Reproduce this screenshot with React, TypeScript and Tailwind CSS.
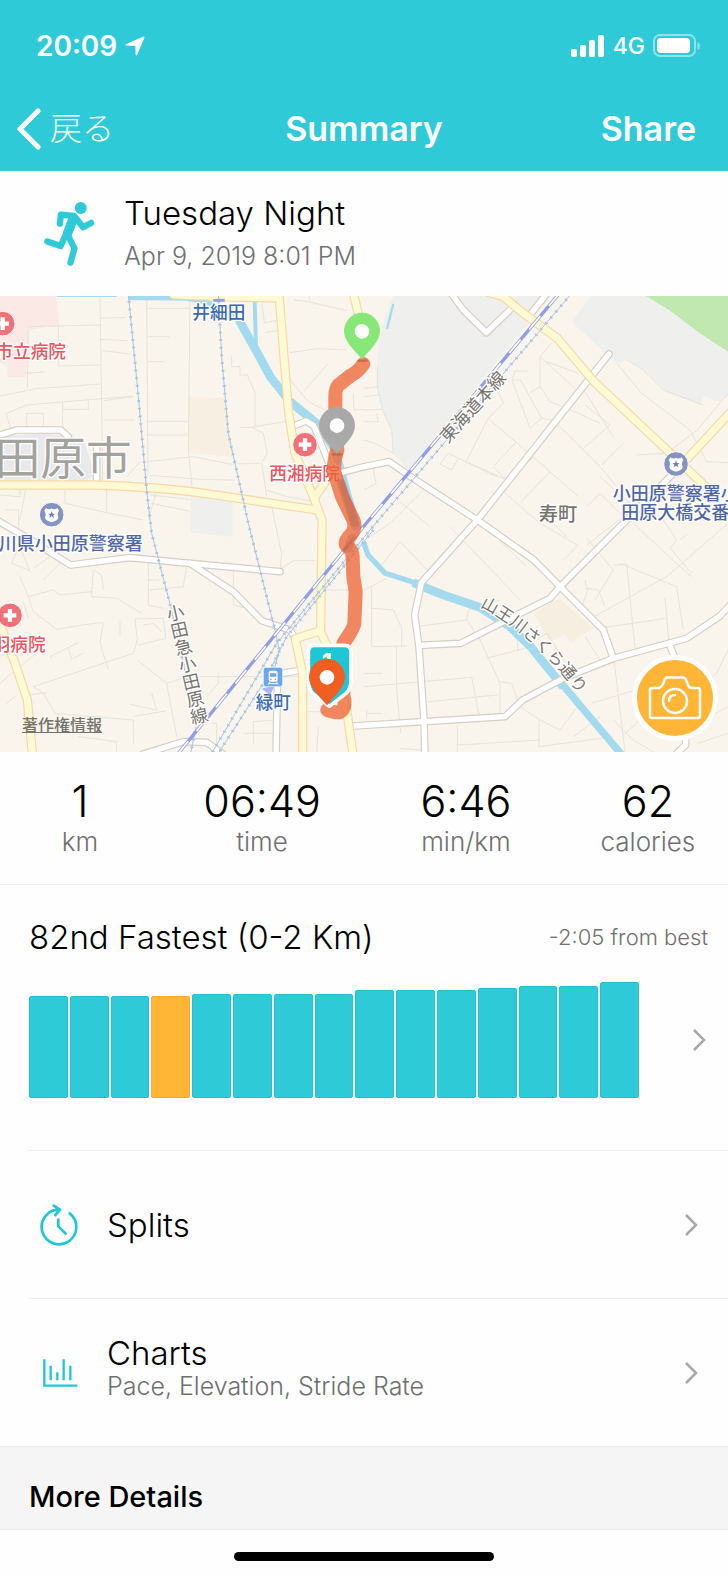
import { ReactNode } from 'react';

const BARS = [102, 102, 102, 102, 104, 104, 104, 104, 108, 108, 108, 110, 112, 112, 116];
const MAX_BAR = 116;
const CURRENT_BAR = 3;

const STATS = [
  { value: '1', label: 'km', width: 'w-[22%]' },
  { value: '06:49', label: 'time', width: 'flex-1' },
  { value: '6:46', label: 'min/km', width: 'flex-1' },
  { value: '62', label: 'calories', width: 'w-[22%]' },
];

const LANES = [
  'M85 120L82 295M87 110L300 105M300 18L308 570M0 318L110 296L300 282M20 370L80 345L400 318M188 338L188 440M188 358H265V332M80 370H130V412H80ZM175 105V228L300 225M310 332L400 320M300 148L382 152M308 182L390 192M302 85L378 82M310 390H405M18 370L32 415',
  'M440 25L444 560M440 55H568M570 28L565 480L576 590M444 140H508M442 215H494M444 394H562M444 435H562M444 515L580 500L690 522L780 520M450 556L600 568L705 570M695 200V230H720V255H742L765 310V410M720 412H755L790 430L802 490L785 520L800 620M755 412L860 394M785 40L793 98L830 92M795 128L832 122',
  'M870 188L950 176L1040 180M985 220L912 303M870 270L925 335L985 365M928 18V32M880 30L925 35L1040 62M1060 310L1062 360L1092 358M80 250L130 246M420 515L380 560',
  'M195 600V640L320 668L430 690M320 600V668M470 600L445 690M450 615L570 628M455 640L570 664M60 585V620L0 615M15 660H56V720M80 580L60 690M815 650L845 790L840 840M800 600L860 620L930 632',
  'M1132 230V290L1148 360L1175 420L1180 490M1092 295L1135 290M1092 320L1140 315M1092 360L1145 358M1130 370L1135 395L1092 395M1092 450L1130 462L1180 490M1120 535L1128 580L1092 600',
  'M1492 300L1510 340L1465 385L1398 515M1465 385L1650 545L1735 620M1398 515L1520 570M1545 460L1480 530L1520 570M1345 490L1376 505L1355 540L1320 522ZM1376 505L1490 560M1536 270L1562 340L1590 415M1536 270H1562L1625 385L1590 415M1545 243H1582M1545 243L1536 270M1625 385L1655 390L1700 430L1800 530L1850 590',
  'M1620 200V290L1650 335L1735 370L1800 400M1620 200L1655 158M1640 215L1735 250M1620 200L1730 300M1590 308L1620 290M1755 345L1830 405L1750 475M1745 290L1840 440M1870 460L1805 525M1910 495L2000 490L2092 420L2184 310M1850 220L1925 310L2070 420L2120 515L2184 518M1882 210L1930 240L1990 300L2110 345',
  'M1505 600L1620 700L1732 765M1650 545L1560 640M1600 500L1510 590M1760 650L1800 610L1870 680L1760 765M1800 560L1900 650M1200 635L1290 710M1270 600L1170 700L1110 740',
  'M60 770L90 845M100 835L150 800M60 860L85 920L160 900L180 915L275 905L280 840L305 855L310 900M275 905V920L350 925L425 970M85 920L100 965L170 1018L280 1000L310 998L300 1060L325 1140M130 870L180 820M58 765L35 820L90 842M70 935L85 985',
  'M360 996V1035M405 987L412 1050L400 1090L100 1190M405 987L490 985L497 1045L415 1065M430 1005L460 1000L485 1025M150 1100L235 1058M205 1075L215 1108L250 1090M412 1110L500 1180L530 1340M500 1180L560 1160H900M455 1210L470 1260L390 1243M0 1180L120 1080M20 1240L50 1215M100 1190L130 1210L165 1270M90 1215L140 1208',
  'M165 1270L400 1290V1360M235 1340L350 1355V1386M400 1280L500 1262M445 820V945L490 955M445 870H480M550 890L560 830M450 900L550 890M700 840V945L740 955M845 835L880 812H945M635 1300H650V1386M760 1295V1360M730 1330L820 1330M760 1295L830 1290M655 1150V1180L620 1220M925 1265H960M955 1310L950 1386M970 900H1050',
  'M1115 890V1070L1220 1068M1115 955L1180 960L1205 1015V1070M1092 900L1160 865M1262 1008L1400 990L1405 960L1500 930M1400 990L1440 1050L1500 1180V1290M1460 1105L1600 1068M1550 1030L1555 1085M1190 1070V1200L1202 1330M1092 1190L1415 1162M1415 1162L1437 1275M1285 1235L1492 1215M1100 1260V1290M1100 1270H1145M1092 1150H1148',
  'M1435 690L1580 830M1350 710L1560 930M1200 755L1300 860M1200 755L1145 825M1700 740L1650 690M1735 765L1690 810M1760 745L1840 840L1785 930M1840 825L1880 822L1905 1075M1755 870L1760 895L1795 900L1815 950M1765 895L1745 950M1782 980L2000 860L2184 700M1860 820L2030 890L2050 1020M1995 925L2007 1060M1790 1015L1900 1000L1995 985',
  'M1900 700L2040 830L2075 860M1990 690L2030 750L2010 775L2075 850M2040 750L2060 735M1610 1050L1640 1030L1700 1120M1755 1040L1800 1110M1500 1175L1535 1180L1560 1250L1620 1290L1680 1320L1740 1240M1617 1290V1370L1840 1340M1800 1280L1720 1340M1775 1240L1990 1175M1842 1110L1875 1386M1990 1175L2020 1260',
  'M1372 1305V1386M1375 1365L1620 1350M1200 1375L1280 1382M1840 1290L1900 1350L1960 1386M2110 1290L2184 1250M2184 1080L2150 1150L2110 1180M1870 1335L1920 1290M2092 1360L2184 1330',
];

const YELLOW_ROADS = [
  'M520 14Q700 22 838 24L852 200L866 370L885 490L942 625L966 690L962 1022L886 1046L908 1150V1400',
  'M1000 540L942 625M0 585H280Q480 590 640 614L950 660',
  'M1060 10L1076 76M960 1022L990 1085L1040 1260L1060 1400',
  'M1460 5L1510 20L1560 62L1672 145L1782 275L1932 415L2128 600M2060 508L2190 368',
  'M-10 975L45 1120L82 1230L98 1400',
];

const WHITE_ROADS = [
  'M-10 438L50 420H182L205 440M290 470V575M-10 690L100 755L212 825L390 803L570 820L840 845',
  'M570 820L700 905L785 992L870 1020L892 1055M835 1152L905 1140M832 1190L828 1400M430 1392L550 1355L620 1357L680 1400',
  'M1060 1308L1272 1295L1515 1280L1568 1230L1690 1165L1840 1105L2060 1045L2160 978L2190 945',
  'M1827 192L1432 690L1264 878L1244 975L1257 1070L1272 1290L1275 1400',
  'M1030 546L1092 530L1167 515L1232 560L1432 690L1602 810L1680 890L1810 1020L1840 1105',
  'M1257 1066L1382 1060L1550 975L1650 925L1680 890L1880 690L2050 520',
  'M888 405L918 393L942 408L985 515M1350 5L1390 60L1459 128L1545 45M1592 72L1645 5',
  'M2007 1060L2025 1105M2057 1330V1365L2030 1390',
];

const RAILS = [
  'M385 10L415 320L440 600L455 730L512 950L590 1300L572 1390',
  'M655 10L665 200L685 430L745 700L825 1020L838 1080L820 1150',
  'M1715 10L1110 720L830 1060L635 1390',
  'M1120 720L860 1040L790 1180L655 1390',
];

function Chevron() {
  return (
    <svg className="h-6 w-4 shrink-0" viewBox="0 0 16 24" fill="none" stroke="#a8a8a8" strokeWidth="2.5" aria-hidden="true">
      <path d="M2 2L12 12L2 22" />
    </svg>
  );
}

function Pin({ x, y, color }: { x: number; y: number; color: string }) {
  return (
    <g transform={`translate(${x} ${y})`}>
      <path d="M0 84C-22 58 -54 30 -54 0A54 56 0 0 1 54 0C54 30 22 58 0 84Z" fill={color} />
      <circle r="22" fill="#fff" />
    </g>
  );
}

function Hospital({ x, y }: { x: number; y: number }) {
  return (
    <g transform={`translate(${x} ${y})`}>
      <circle r="37" fill="#f17179" stroke="#fff" strokeWidth="3" />
      <path d="M0 -19V19M-19 0H19" stroke="#fff" strokeWidth="13" />
    </g>
  );
}

function Police({ x, y }: { x: number; y: number }) {
  return (
    <g transform={`translate(${x} ${y})`}>
      <circle r="37" fill="#8494bf" stroke="#fff" strokeWidth="3" />
      <path d="M-17 -20Q-8 -13 0 -19Q8 -13 17 -20L22 -12Q15 -2 20 8Q20 18 0 23Q-20 18 -20 8Q-15 -2 -22 -12Z" fill="#fff" />
      <path d="M0 -11L3 -3H11L5 2L7 10L0 5L-7 10L-5 2L-11 -3H-3Z" fill="#6f82b5" />
    </g>
  );
}

function RouteMap() {
  return (
    <svg className="block w-full" viewBox="0 18 2184 1368" role="img" aria-label="Route map">
      <rect y="18" width="2184" height="1368" fill="#f9f5ed" />

      {/* land areas */}
      <path d="M1182 10L1150 100L1132 190V290L1148 360L1175 420L1180 490L1225 540L1660 10Z" fill="#eff0ee" />
      <path d="M1780 10L1714 95L1850 220L1882 210L1935 242L2000 305L2100 345L2112 318L2155 335L2184 320V10Z" fill="#eff0ee" />
      <path d="M1925 10L2010 62L2100 130L2184 185V10Z" fill="#c1e8b0" />
      <path d="M0 10H168L178 105L87 120L78 262H22V225L0 220Z" fill="#fbe9e6" />
      <path d="M0 440L130 430L250 445L285 560L240 575H0Z" fill="#e9e9ec" />
      <path d="M567 322L672 325L686 420L702 500L567 490Z" fill="#f7efe1" />
      <path d="M572 620L697 634V740L572 728Z" fill="#eff0ee" />
      <path d="M1602 970L1677 925L1782 1015L1712 1055L1692 1035L1652 1055Z" fill="#f6eee0" />

      {/* side streets */}
      {LANES.map((d) => (
        <path key={d} d={d} fill="none" stroke="#e5e3db" strokeWidth="3" />
      ))}

      {/* rivers */}
      <g fill="none" stroke="#a3daee" strokeLinejoin="round">
        <path d="M170 18H350" strokeWidth="6" />
        <path d="M385 22L560 24Q650 35 720 95" strokeWidth="16" />
        <path d="M718 92L770 185L812 262L870 335L960 408L1005 480L1040 610L1072 720" strokeWidth="26" />
        <path d="M764 35L768 170" strokeWidth="12" />
        <path d="M1180 42L1161 116" strokeWidth="7" />
        <path d="M1090 755L1104 795L1156 850L1250 880" strokeWidth="16" />
        <path d="M1240 878L1330 915L1440 952L1530 1010L1592 1070L1640 1130L1690 1190" strokeWidth="26" />
        <path d="M1680 1175L1735 1240L1866 1395" strokeWidth="22" />
      </g>

      {/* roads: casing first, fill on top */}
      <g fill="none" strokeLinejoin="round" strokeLinecap="round">
        {WHITE_ROADS.map((d) => (
          <path key={d} d={d} stroke="#d6cdc4" strokeWidth="23" />
        ))}
        {WHITE_ROADS.map((d) => (
          <path key={d} d={d} stroke="#fff" strokeWidth="16" />
        ))}
        {YELLOW_ROADS.map((d) => (
          <path key={d} d={d} stroke="#f6d8a4" strokeWidth="28" />
        ))}
        {YELLOW_ROADS.map((d) => (
          <path key={d} d={d} stroke="#fcf9d4" strokeWidth="21" />
        ))}
      </g>

      {/* railways */}
      <g fill="none">
        {RAILS.map((d) => (
          <g key={d} stroke="#a9c3e2">
            <path d={d} strokeWidth="3" />
            <path d={d} strokeWidth="9" strokeDasharray="5 18" />
          </g>
        ))}
        <path d="M1680 8L1092 708L530 1396" stroke="#919ee6" strokeWidth="10" />
        <path d="M1680 8L1092 708L530 1396" stroke="#fff" strokeWidth="5" strokeDasharray="52 40" />
        <path d="M640 31H674" stroke="#919ee6" strokeWidth="9" />
      </g>

      {/* labels */}
      <g fontFamily="'Noto Sans CJK JP', sans-serif" fontSize="53" fontWeight="500" stroke="#fff" strokeWidth="8" strokeLinejoin="round" paintOrder="stroke">
        <text x="-16" y="554" fontSize="137" fontWeight="400" fill="#a3a39e">田原市</text>
        <g fill="#ea565f">
          <text x="-14" y="205">市立病院</text>
          <text x="808" y="570">西湘病院</text>
          <text x="-22" y="1082">羽病院</text>
        </g>
        <g fill="#3a69b2">
          <text x="577" y="86">井細田</text>
          <text x="767" y="1258">緑町</text>
        </g>
        <g fill="#5067a6">
          <text x="-4" y="781" fontSize="54">川県小田原警察署</text>
          <text x="1838" y="629" fontSize="54">小田原警察署小</text>
          <text x="1864" y="688" fontSize="54">田原大橋交番</text>
        </g>
        <text x="1616" y="694" fontSize="58" fill="#77746e">寿町</text>
        <g fontSize="53" fontWeight="400" fill="#77746e">
          <text transform="translate(1344 462) rotate(-48)">東海道本線</text>
          <text className="[writing-mode:vertical-rl]" transform="translate(520 942) rotate(-13)">小田急小田原線</text>
          <path id="street" d="M1440 950Q1612 1038 1758 1242" fill="none" stroke="none" />
          <text fontSize="50">
            <textPath href="#street">山王川さくら通り</textPath>
          </text>
        </g>
      </g>

      <Hospital x={8} y={101} />
      <Hospital x={915} y={464} />
      <Hospital x={30} y={976} />
      <Police x={155} y={674} />
      <Police x={2028} y={522} />

      {/* station */}
      <path d="M785 1196L810 1215L825 1185Z" fill="#a9b6f2" />
      <rect x="790" y="1132" width="58" height="58" rx="8" fill="#6ba4ef" stroke="#fff" strokeWidth="2" />
      <rect x="806" y="1142" width="27" height="33" rx="6" fill="#fff" />
      <path d="M810 1150H829V1160H810ZM811 1166H815V1170H811ZM824 1166H828V1170H824Z" fill="#6ba4ef" />
      <path d="M809 1176L804 1184M830 1176L835 1184M807 1181H832" stroke="#fff" strokeWidth="3" />

      {/* run track */}
      <g fill="none" strokeLinecap="round" strokeLinejoin="round">
        <path
          d="M1090 222Q1075 245 1050 258L1015 286Q1006 296 1006 320V400L1012 480Q998 520 1004 550L1026 620L1060 690Q1068 712 1056 730Q1030 755 1040 768Q1058 780 1058 800L1060 860L1067 905L1063 1000Q1062 1015 1030 1060V1215Q1040 1255 1020 1266Q1008 1270 982 1260"
          stroke="#ed6434"
          strokeOpacity="0.76"
          strokeWidth="42"
        />
        <path d="M1024 580L1064 700M1056 745L1044 775" stroke="#b8604a" strokeOpacity="0.35" strokeWidth="26" />
        <path d="M1076 212H1100M998 493H1026" stroke="#a84f30" strokeOpacity="0.5" strokeWidth="7" />
      </g>

      <Pin x={1086} y={124} color="#87e777" />
      <Pin x={1011} y={407} color="#a9a9a9" />

      {/* km marker */}
      <path d="M944 1066H1034Q1053 1066 1053 1086V1172Q1053 1195 1038 1210L988 1249L938 1210Q925 1195 925 1172V1086Q925 1066 944 1066Z" fill="#1ec6d6" stroke="#fff" strokeWidth="11" strokeLinejoin="round" />
      <text x="966" y="1138" fontFamily="Inter, sans-serif" fontSize="66" fontWeight="800" fill="#fff">1</text>
      <Pin x={981} y={1162} color="#f15e22" />
    </svg>
  );
}

function Row({ icon, title, subtitle }: { icon: ReactNode; title: string; subtitle?: string }) {
  return (
    <button className="flex h-[148px] w-full items-center border-t border-[#f0f0f0] pr-7 text-left">
      <span className="w-[78px] shrink-0 pl-[11px]">{icon}</span>
      <span className="flex-1">
        <span className="block text-[33px] leading-[36px]">{title}</span>
        {subtitle && <span className="block pb-2.5 text-[25px] leading-[30px] text-[#6f6f6f]">{subtitle}</span>}
      </span>
      <Chevron />
    </button>
  );
}

export default function App() {
  return (
    <div className="min-h-screen bg-[#fefefe] font-['Inter','Noto_Sans_CJK_JP',sans-serif] font-light text-black">
      <header className="bg-[#2ecad8] pb-[5px] text-white">
        <div className="flex h-[92px] items-center justify-between pr-[27px] pl-9">
          <div className="flex items-center gap-2">
            <span className="text-[28px] font-semibold">20:09</span>
            <svg className="h-5 w-5" viewBox="0 0 20 20" fill="#fff" aria-hidden="true">
              <path d="M0.8 8.2L18.2 0.5Q19.8 0.2 19.4 1.8L12 19Q11.2 20.2 10.6 18.6L10.4 9.9L1.2 9.6Q-0.2 9 0.8 8.2Z" />
            </svg>
          </div>
          <div className="flex items-center gap-2">
            <svg className="h-[22px] w-[34px]" viewBox="0 0 34 22" fill="#fff" aria-hidden="true">
              <rect y="14" width="6" height="8" rx="2" />
              <rect x="9" y="10" width="6" height="12" rx="2" />
              <rect x="18" y="5" width="6" height="17" rx="2" />
              <rect x="27" y="0" width="6" height="22" rx="2" />
            </svg>
            <span className="text-[23px] font-medium">4G</span>
            <svg className="h-6 w-12" viewBox="0 0 48 24" aria-hidden="true">
              <rect x="1" y="1" width="41" height="21" rx="6" fill="none" stroke="#8fe2ea" strokeWidth="2" />
              <rect x="4" y="4" width="33" height="15" rx="4" fill="#fff" />
              <path d="M44.500 8Q47 9 47 12Q47 15 44.500 16Z" fill="#8fe2ea" />
            </svg>
          </div>
        </div>
        <nav className="grid h-[74px] grid-cols-3 items-center pr-8 pl-4">
          <button className="flex items-center gap-2 text-[32px] leading-10">
            <svg className="h-[42px] w-[26px]" viewBox="0 0 26 42" fill="none" stroke="#fff" strokeWidth="5" strokeLinecap="round" strokeLinejoin="round" aria-hidden="true">
              <path d="M22 3L4 21L22 39" />
            </svg>
            戻る
          </button>
          <h1 className="pl-4 text-center text-[34px] leading-10 font-semibold">Summary</h1>
          <button className="justify-self-end text-[34px] leading-10 font-semibold">Share</button>
        </nav>
      </header>

      <section className="flex h-[125px] items-center gap-[28px] pl-[43px]">
        <svg className="h-[67px] w-[53px]" viewBox="128 605 160 200" fill="none" stroke="#2ecad8" strokeWidth="19" strokeLinecap="round" strokeLinejoin="round" aria-hidden="true">
          <circle cx="242" cy="628" r="18" fill="#2ecad8" stroke="none" />
          <path d="M179 675L182 648L222 652L249 686L273 673" />
          <path d="M198 706L181 743L141 729M200 704L223 750L211 793" />
          <path d="M214 652L228 660L208 708L195 703Z" fill="#2ecad8" strokeWidth="14" />
        </svg>
        <div>
          <h2 className="text-[33px] leading-[44px]">Tuesday Night</h2>
          <p className="text-[25px] leading-[42px] text-[#707070]">Apr 9, 2019 8:01 PM</p>
        </div>
      </section>

      <div className="relative">
        <RouteMap />
        <a href="#legal" className="absolute bottom-4 left-[22px] font-['Noto_Sans_CJK_JP',sans-serif] text-base font-medium text-[#74726c] underline">
          著作権情報
        </a>
        <button aria-label="Add photo" className="absolute right-2.5 bottom-[11px] flex size-[86px] items-center justify-center rounded-full border-[5px] border-white bg-[#ffb536]">
          <svg className="h-11 w-[54px]" viewBox="0 0 54 44" fill="none" stroke="#fff" strokeWidth="2.5" strokeLinejoin="round" strokeLinecap="round" aria-hidden="true">
            <path d="M4 12H11Q14 11 15 8L17 3Q18 1.500 19 1.500H35Q37 1.500 38 4L40 9Q41 12 44 12H50Q52 12 52 14V40Q52 42 50 42H4Q2 42 2 40V14Q2 12 4 12Z" />
            <circle cx="27" cy="25" r="12" />
            <path d="M21 25Q21 19 27 19" />
          </svg>
        </button>
      </div>

      <dl className="flex h-[132px] pt-6 text-center">
        {STATS.map((s) => (
          <div key={s.label} className={`flex flex-col-reverse justify-end ${s.width}`}>
            <dt className="text-[26px] leading-[32px] text-[#707070]">{s.label}</dt>
            <dd className="text-[43px] leading-[50px]">{s.value}</dd>
          </div>
        ))}
      </dl>

      <section className="border-t border-[#f0f0f0] pt-8 pb-[52px] pl-[29px]">
        <div className="flex items-center justify-between pr-5">
          <h2 className="text-[33px] leading-10">82nd Fastest (0-2 Km)</h2>
          <p className="text-[22px] text-[#707070]">-2:05 from best</p>
        </div>
        <button aria-label="Show ranking" className="mt-[25px] flex w-full items-center justify-between pr-5">
          <span className="mr-[53px] flex h-[116px] flex-1 items-end gap-0.5">
            {BARS.map((bar, i) => (
              <span
                key={i}
                className={`flex-1 rounded-[2px] border ${i === CURRENT_BAR ? 'border-[#fbac25] bg-[#ffb536]' : 'border-[#1fc2d1] bg-[#2ecad8]'}`}
                style={{ height: `${(bar / MAX_BAR) * 100}%` }}
              />
            ))}
          </span>
          <Chevron />
        </button>
      </section>

      <div className="pl-[29px]">
        <Row
          title="Splits"
          icon={
            <svg className="h-[42px] w-[38px]" viewBox="120 75 114 126" fill="none" stroke="#1fc6d5" strokeWidth="8" strokeLinecap="round" strokeLinejoin="round" aria-hidden="true">
              <path d="M209 103A52 52 0 1 1 178 92M161 80L180 92L166 108M175 122V142L197 164" />
            </svg>
          }
        />
        <Row
          title="Charts"
          subtitle="Pace, Elevation, Stride Rate"
          icon={
            <svg className="ml-[3px] h-[28px] w-[35px]" viewBox="129 536 105 84" fill="none" stroke="#1fc6d5" strokeWidth="7" aria-hidden="true">
              <path d="M133 537V616H232M152 556V600M172 576V600M191 537V600M211 556V600" />
            </svg>
          }
        />
      </div>

      <h2 className="border-y border-[#ededed] bg-[#f5f5f5] pt-[31px] pb-[13px] pl-[29px] text-[29px] leading-[38px] font-medium">More Details</h2>
      <div className="flex justify-center pt-[22px] pb-4">
        <div className="h-[9px] w-[260px] rounded-full bg-black" />
      </div>
    </div>
  );
}
